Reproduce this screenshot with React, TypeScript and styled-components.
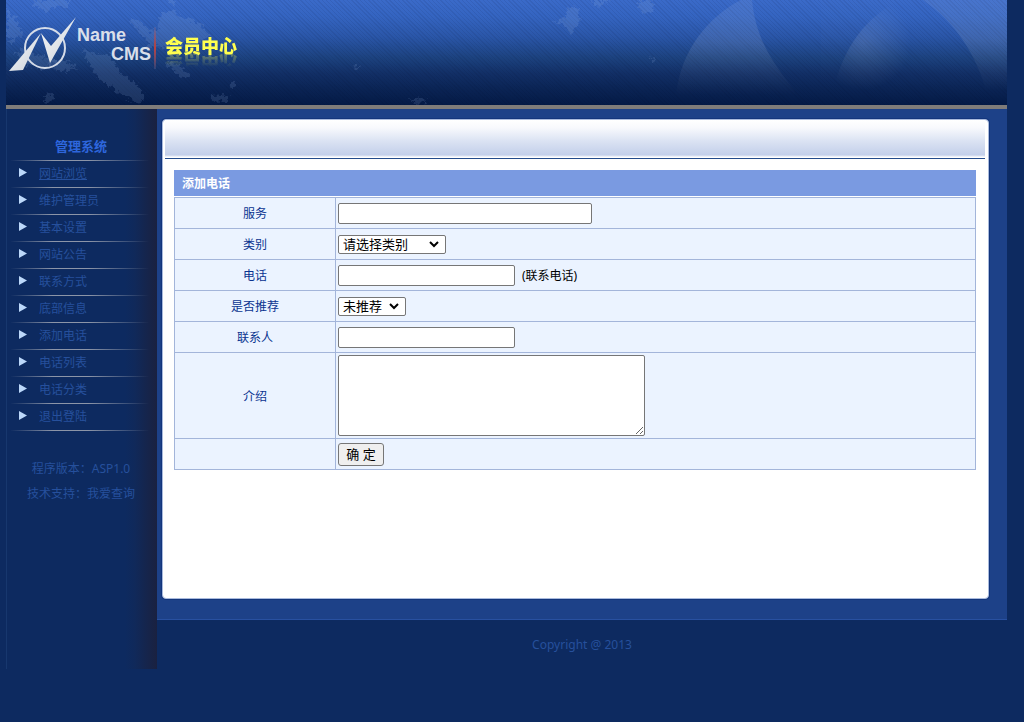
import React from "react";
import styled, { createGlobalStyle } from "styled-components";

const GlobalStyle = createGlobalStyle`
  *, *::before, *::after { box-sizing: border-box; }
  body {
    margin: 0;
    background: #0d2a60;
    font-family: "Noto Sans", "Noto Sans CJK SC", sans-serif;
    font-size: 12px;
    color: #26509c;
  }
`;

const Page = styled.div`
  padding: 0 17px 0 6px;
`;

const Banner = styled.header`
  display: grid;
  height: 109px;
  overflow: hidden;
  border-bottom: 4px solid #7f7c7a;
  background:
    repeating-linear-gradient(45deg, rgba(0, 10, 40, 0.08) 0 1px, transparent 1px 3px),
    linear-gradient(#3a6ac9 0%, #3464c0 16%, #2a56a8 35%, #1c427f 55%, #122f66 70%, #0a2353 86%, #041a46 100%);

  > * { grid-area: 1 / 1; }
`;

const BannerArt = styled.svg`
  width: 100%;
  height: 105px;
`;

const Brand = styled.div`
  display: flex;
  align-items: flex-start;
  padding: 16px 0 0 3px;
`;

const LogoMark = styled.svg`
  width: 68px;
  height: 56px;
`;

const BrandName = styled.div`
  display: flex;
  flex-direction: column;
  width: 74px;
  padding-top: 10px;
  color: #d9dfea;
  font: bold 18px/19px "Liberation Sans", sans-serif;

  span:last-child { align-self: flex-end; }
`;

const BrandRule = styled.div`
  width: 2px;
  height: 42px;
  margin: 11px 9px 0 3px;
  background: linear-gradient(rgba(150, 130, 170, 0.2), #b8413f 50%, rgba(150, 130, 170, 0.2));
`;

const Section = styled.h1`
  margin: 19px 0 0;
  color: #ffff4f;
  font: 900 18px/20px "Noto Sans CJK SC", sans-serif;
  -webkit-box-reflect: below -4px linear-gradient(transparent 20%, rgba(0, 0, 0, 0.4));
`;

const Columns = styled.div`
  display: flex;
  align-items: flex-start;
`;

const Sidebar = styled.aside`
  flex: 0 0 151px;
  min-height: 560px;
  padding: 24px 6px 0 4px;
  border-left: 1px solid #17376e;
  background: linear-gradient(to right, transparent 118px, #10295a 128px, #1a2140);
`;

const SideTitle = styled.h2`
  margin: 0;
  height: 27px;
  color: #2e66dc;
  font-size: 13px;
  line-height: 27px;
  text-align: center;
`;

const Menu = styled.ul`
  margin: 0;
  padding: 0;
  list-style: none;
  border-top: 1px solid;
  border-image: linear-gradient(to right, transparent, #8c95a8 30%, #8c95a8 55%, transparent 98%) 1;
`;

const MenuItem = styled.li`
  display: flex;
  align-items: center;
  height: 27px;
  padding-left: 8px;
  border-bottom: 1px solid;
  border-image: linear-gradient(to right, transparent, #8c95a8 30%, #8c95a8 55%, transparent 98%) 1;
`;

const Arrow = styled.svg`
  width: 8px;
  height: 9px;
  margin: 0 12px 4px 0;
`;

const MenuLink = styled.a<{ $underlined?: boolean }>`
  color: #26509c;
  line-height: 18px;
  text-decoration: ${(p) => (p.$underlined ? "underline" : "none")};
`;

const About = styled.div`
  padding-top: 25px;
  line-height: 25px;
  text-align: center;

  p { margin: 0; }
`;

const Content = styled.div`
  flex: 1;
  min-width: 0;
`;

const Stage = styled.main`
  padding: 10px 18px 20px 5px;
  border-bottom: 1px solid #2850a0;
  background: #1d4188;
`;

const Panel = styled.div`
  min-height: 480px;
  padding: 0 3px;
  border: 1px solid #a9badd;
  border-radius: 4px;
  background: #fff;
  box-shadow: 0 0 0 1px #13357c;
`;

const PanelBar = styled.div`
  height: 39px;
  margin: 0 0 0 -1px;
  border-bottom: 1px solid #234b8c;
  background: linear-gradient(#fff 0, #f8f9fd 20%, #dbe3f3 55%, #c3cfea 92%, #fff 98%);
`;

const FormArea = styled.form`
  margin: 11px 9px 0 8px;
`;

const FormTitle = styled.h2`
  margin: 0 0 1px;
  height: 26px;
  padding-left: 8px;
  background: #7a9ae1;
  color: #fff;
  font-size: 12px;
  line-height: 27px;
`;

const Fields = styled.div`
  border: 1px solid #a3b5da;
`;

const FieldRow = styled.div`
  display: flex;
  min-height: 31px;
  background: #ebf3ff;

  & + & { border-top: 1px solid #a3b5da; }
  &:first-child { min-height: 30px; }
`;

const FieldLabel = styled.label`
  display: flex;
  flex: 0 0 20%;
  align-items: center;
  justify-content: center;
  color: #0a3390;
`;

const FieldCell = styled.div`
  display: flex;
  flex: 1;
  align-items: center;
  gap: 7px;
  padding: 2px;
  border-left: 1px solid #a3b5da;
  color: #000;
`;

const TextBox = styled.input<{ $width: number }>`
  width: ${(p) => p.$width}px;
  height: 21px;
  border: 1px solid #767676;
  border-radius: 2px;
  background: #fff;
  font: inherit;
`;

const SelectBox = styled.span<{ $width: number }>`
  display: grid;
  align-items: center;
  width: ${(p) => p.$width}px;

  > * { grid-area: 1 / 1; }
`;

const SelectControl = styled.select`
  appearance: none;
  width: 100%;
  height: 19px;
  padding: 0 20px 0 4px;
  border: 1px solid #767676;
  border-radius: 2px;
  background-color: #fff;
  color: #000;
  font-family: inherit;
  font-size: 13px;
  line-height: 17px;
`;

const Chevron = styled.svg`
  justify-self: end;
  width: 10px;
  height: 7px;
  margin-right: 7px;
  pointer-events: none;
`;

const TextArea = styled.textarea`
  width: 307px;
  height: 81px;
  border: 1px solid #767676;
  border-radius: 2px;
  background: #fff;
  font: inherit;
`;

const Submit = styled.button`
  width: 46px;
  height: 23px;
  padding: 0;
  border: 1px solid #767676;
  border-radius: 3px;
  background: #efefef;
  color: #000;
  font-family: inherit;
  font-size: 13px;
  line-height: 21px;
`;

const Footer = styled.footer`
  padding-top: 16px;
  font-size: 12px;
  line-height: 18px;
  text-align: center;
`;

const menu = [
  "网站浏览", "维护管理员", "基本设置", "网站公告", "联系方式",
  "底部信息", "添加电话", "电话列表", "电话分类", "退出登陆",
];

function Select({ id, width, option }: { id: string; width: number; option: string }) {
  return (
    <SelectBox $width={width}>
      <SelectControl id={id}><option>{option}</option></SelectControl>
      <Chevron viewBox="0 0 10 7" aria-hidden="true">
        <path d="M1 1L5 5 9 1" fill="none" stroke="#000" strokeWidth="2" />
      </Chevron>
    </SelectBox>
  );
}

export default function App() {
  return (
    <>
      <GlobalStyle />
      <Page>
        <Banner>
          <BannerArt viewBox="0 0 1001 105" preserveAspectRatio="xMaxYMin slice" aria-hidden="true">
            <defs>
              <linearGradient id="petal" x1="0" y1="0" x2="0" y2="1">
                <stop offset="0" stopColor="#fff" stopOpacity=".07" />
                <stop offset=".45" stopColor="#fff" stopOpacity=".1" />
                <stop offset="1" stopColor="#fff" stopOpacity="0" />
              </linearGradient>
              <linearGradient id="petalEdge" x1="0" y1="0" x2="0" y2="1">
                <stop offset="0" stopColor="#fff" stopOpacity=".02" />
                <stop offset=".4" stopColor="#fff" stopOpacity=".05" />
                <stop offset="1" stopColor="#fff" stopOpacity="0" />
              </linearGradient>
              <radialGradient id="petalGlow" gradientUnits="userSpaceOnUse" cx="857" cy="42" r="48">
                <stop offset="0" stopColor="#fff" stopOpacity=".12" />
                <stop offset="1" stopColor="#fff" stopOpacity="0" />
              </radialGradient>
              <filter id="ragged" x="-10%" y="-10%" width="120%" height="120%">
                <feTurbulence type="fractalNoise" baseFrequency=".22" numOctaves="4" seed="4" />
                <feDisplacementMap in="SourceGraphic" scale="11" xChannelSelector="R" yChannelSelector="G" />
              </filter>
            </defs>
            <path d="M735 0C702 17 675 50 670 95H792C771 68 750 43 746 0Z" fill="url(#petal)" />
            <path d="M893 0C861 18 838 43 826 95H940V0Z" fill="url(#petalGlow)" />
            <path d="M917 0C950 23 970 55 980 90H1001V0Z" fill="url(#petal)" />
            <path d="M893 0C861 18 838 43 829 90H815V0Z" fill="url(#petalEdge)" fillOpacity=".2" />
            <g fill="#9db7e6" fillOpacity=".15" filter="url(#ragged)">
              <path d="M0 10L10 18 15 34 7 43 0 38Z" />
              <path d="M26 0H66L58 8 47 7 40 12 31 8Z" />
              <path d="M124 20L137 22 144 32 152 30 154 14 166 10 177 18 187 20 205 35 192 43 180 42 174 48 145 47 136 36Z" />
              <path d="M76 49L91 55 105 54 113 72 130 83 139 96 134 103 121 98 106 88 91 76 83 63Z" />
              <path d="M8 52L22 49 30 55 45 59 54 64 38 69 21 65Z" />
              <path d="M42 63L57 60 70 67 61 71 48 69Z M160 62L175 66 184 78 172 76Z" />
              <path d="M38 95L46 94 50 98 41 103Z M203 96L224 95 220 100 207 101Z M223 83L229 82 230 87 225 90Z" />
              <path d="M546 22L560 16 564 5 572 8 574 23 565 33 557 24Z" />
              <path d="M585 0H603L596 7 590 6Z M630 0H646L648 10 637 14 633 6Z" />
              <path d="M163 0H172L170 5 165 4Z M404 99L419 98 422 103 408 104Z M348 67L353 65 352 71Z M644 58L649 57 647 62Z" />
            </g>
          </BannerArt>
          <Brand>
            <LogoMark viewBox="0 0 68 56" aria-hidden="true">
              <defs>
                <linearGradient id="steel" x1="0" y1="0" x2="1" y2="1">
                  <stop offset="0" stopColor="#f4f6f8" />
                  <stop offset=".5" stopColor="#e2e6ea" />
                  <stop offset="1" stopColor="#c9d0da" />
                </linearGradient>
              </defs>
              <circle cx="36" cy="32" r="20" fill="none" stroke="#d5dce8" strokeWidth="2" />
              <path d="M0 55L32 17 14 54Z" fill="url(#steel)" />
              <path d="M32 17L42 30 67 1 41 47Z" fill="url(#steel)" />
            </LogoMark>
            <BrandName>
              <span>Name</span>
              <span>CMS</span>
            </BrandName>
            <BrandRule />
            <Section>会员中心</Section>
          </Brand>
        </Banner>
        <Columns>
          <Sidebar>
            <SideTitle>管理系统</SideTitle>
            <Menu>
              {menu.map((name, i) => (
                <MenuItem key={name}>
                  <Arrow viewBox="0 0 8 9" aria-hidden="true">
                    <path d="M0 0L8 4.5 0 9Z" fill="#bcd8fa" />
                  </Arrow>
                  <MenuLink href="#" $underlined={i === 0}>{name}</MenuLink>
                </MenuItem>
              ))}
            </Menu>
            <About>
              <p>程序版本：ASP1.0</p>
              <p>技术支持：我爱查询</p>
            </About>
          </Sidebar>
          <Content>
            <Stage>
              <Panel>
                <PanelBar />
                <FormArea onSubmit={(e) => e.preventDefault()}>
                  <FormTitle>添加电话</FormTitle>
                  <Fields>
                    <FieldRow>
                      <FieldLabel htmlFor="service">服务</FieldLabel>
                      <FieldCell><TextBox id="service" type="text" $width={254} /></FieldCell>
                    </FieldRow>
                    <FieldRow>
                      <FieldLabel htmlFor="category">类别</FieldLabel>
                      <FieldCell><Select id="category" width={108} option="请选择类别" /></FieldCell>
                    </FieldRow>
                    <FieldRow>
                      <FieldLabel htmlFor="phone">电话</FieldLabel>
                      <FieldCell>
                        <TextBox id="phone" type="text" $width={177} />
                        <span>(联系电话)</span>
                      </FieldCell>
                    </FieldRow>
                    <FieldRow>
                      <FieldLabel htmlFor="featured">是否推荐</FieldLabel>
                      <FieldCell><Select id="featured" width={68} option="未推荐" /></FieldCell>
                    </FieldRow>
                    <FieldRow>
                      <FieldLabel htmlFor="contact">联系人</FieldLabel>
                      <FieldCell><TextBox id="contact" type="text" $width={177} /></FieldCell>
                    </FieldRow>
                    <FieldRow>
                      <FieldLabel htmlFor="intro">介绍</FieldLabel>
                      <FieldCell><TextArea id="intro" /></FieldCell>
                    </FieldRow>
                    <FieldRow>
                      <FieldLabel as="div" />
                      <FieldCell><Submit type="submit">确 定</Submit></FieldCell>
                    </FieldRow>
                  </Fields>
                </FormArea>
              </Panel>
            </Stage>
            <Footer>Copyright @ 2013</Footer>
          </Content>
        </Columns>
      </Page>
    </>
  );
}
